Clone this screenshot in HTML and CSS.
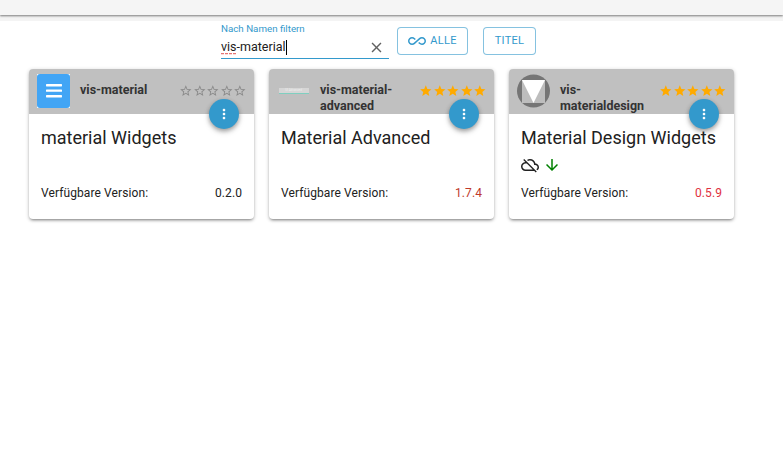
FILE: index.html
```html
<!DOCTYPE html>
<html lang="de">
<head>
<meta charset="utf-8">
<title>Adapter</title>
<link rel="stylesheet" href="styles.css">
</head>
<body>
<div class="appbar"></div>
<div class="toolbar">
  <div class="filter">
    <div class="filter-label">Nach Namen filtern</div>
    <div class="filter-row">
      <span class="filter-value"><span class="spell">vis</span>-material</span><span class="caret"></span>
      <svg class="clear" viewBox="0 0 24 24"><path d="M19 6.41 17.59 5 12 10.59 6.41 5 5 6.41 10.59 12 5 17.59 6.41 19 12 13.41 17.59 19 19 17.59 13.41 12z"/></svg>
    </div>
  </div>
  <button class="btn btn-all"><svg class="inf" viewBox="0 0 24 24"><path d="M18.6 6.62c-1.44 0-2.8.56-3.77 1.53L12 10.66 10.48 12h.01L7.8 14.39c-.64.64-1.49.99-2.4.99-1.87 0-3.39-1.51-3.39-3.38S3.53 8.62 5.4 8.62c.91 0 1.76.35 2.44 1.03l1.13 1 1.51-1.34L9.22 8.2C8.2 7.18 6.84 6.62 5.4 6.62 2.42 6.62 0 9.04 0 12s2.42 5.38 5.4 5.38c1.44 0 2.8-.56 3.77-1.53l2.83-2.5.01.01L13.52 12h-.01l2.69-2.39c.64-.64 1.49-.99 2.4-.99 1.87 0 3.39 1.51 3.39 3.38s-1.52 3.38-3.39 3.38c-.9 0-1.76-.35-2.44-1.03l-1.14-1.01-1.51 1.34 1.27 1.12c1.02 1.01 2.37 1.57 3.82 1.57 2.98 0 5.4-2.41 5.4-5.38s-2.42-5.37-5.4-5.37z"/></svg>ALLE</button>
  <button class="btn btn-title">TITEL</button>
</div>
<main class="cards">
  <article class="card">
    <header class="card-head">
      <div class="logo logo-blue"><svg viewBox="0 0 33 34"><rect class="logo-bg" width="33" height="34" rx="3"/><rect x="9" y="10" width="16" height="2.4" rx=".6"/><rect x="9" y="15.4" width="16" height="2.4" rx=".6"/><rect x="9" y="21" width="16" height="2.4" rx=".6"/></svg></div>
      <div class="name">vis-material</div>
      <div class="stars stars-empty"><svg viewBox="0 0 24 24"><use href="#star-o"/></svg><svg viewBox="0 0 24 24"><use href="#star-o"/></svg><svg viewBox="0 0 24 24"><use href="#star-o"/></svg><svg viewBox="0 0 24 24"><use href="#star-o"/></svg><svg viewBox="0 0 24 24"><use href="#star-o"/></svg></div>
      <button class="fab"><svg viewBox="0 0 24 24"><use href="#dots"/></svg></button>
    </header>
    <div class="card-body">
      <h2 class="title">material Widgets</h2>
      <div class="status"></div>
      <div class="version"><span>Verfügbare Version:</span><span class="v-ok">0.2.0</span></div>
    </div>
  </article>
  <article class="card">
    <header class="card-head">
      <div class="logo logo-adv"><span class="adv-text">UI Advanced</span></div>
      <div class="name">vis-material-advanced</div>
      <div class="stars stars-full"><svg viewBox="0 0 24 24"><use href="#star"/></svg><svg viewBox="0 0 24 24"><use href="#star"/></svg><svg viewBox="0 0 24 24"><use href="#star"/></svg><svg viewBox="0 0 24 24"><use href="#star"/></svg><svg viewBox="0 0 24 24"><use href="#star"/></svg></div>
      <button class="fab"><svg viewBox="0 0 24 24"><use href="#dots"/></svg></button>
    </header>
    <div class="card-body">
      <h2 class="title">Material Advanced</h2>
      <div class="status"></div>
      <div class="version"><span>Verfügbare Version:</span><span class="v-new">1.7.4</span></div>
    </div>
  </article>
  <article class="card">
    <header class="card-head">
      <div class="logo logo-md"><svg viewBox="0 0 33 34"><circle cx="16.5" cy="17" r="16.5" fill="#757575"/><rect x="5" y="6" width="23" height="23" fill="#bdbdbd"/><path d="M5 6h23L16.5 29z" fill="#fff"/></svg></div>
      <div class="name">vis-materialdesign</div>
      <div class="stars stars-full"><svg viewBox="0 0 24 24"><use href="#star"/></svg><svg viewBox="0 0 24 24"><use href="#star"/></svg><svg viewBox="0 0 24 24"><use href="#star"/></svg><svg viewBox="0 0 24 24"><use href="#star"/></svg><svg viewBox="0 0 24 24"><use href="#star"/></svg></div>
      <button class="fab"><svg viewBox="0 0 24 24"><use href="#dots"/></svg></button>
    </header>
    <div class="card-body">
      <h2 class="title">Material Design Widgets</h2>
      <div class="status">
        <svg class="cloud" viewBox="0 0 24 24"><path d="M19.35 10.04C18.67 6.59 15.64 4 12 4c-1.48 0-2.85.43-4.01 1.17l1.46 1.46C10.21 6.23 11.08 6 12 6c3.04 0 5.5 2.46 5.5 5.5v.5H19c1.66 0 3 1.34 3 3 0 1.13-.64 2.11-1.56 2.62l1.45 1.45C23.16 18.16 24 16.68 24 15c0-2.64-2.05-4.78-4.65-4.96zM3 5.27l2.75 2.74C2.56 8.15 0 10.77 0 14c0 3.31 2.69 6 6 6h11.73l2 2L21 20.73 4.27 4 3 5.27zM7.73 10l8 8H6c-2.21 0-4-1.79-4-4s1.79-4 4-4h1.73z"/></svg>
        <svg class="down" viewBox="0 0 24 24"><path d="M20 12l-1.41-1.41L13 16.17V4h-2v12.17l-5.58-5.59L4 12l8 8 8-8z"/></svg>
      </div>
      <div class="version"><span>Verfügbare Version:</span><span class="v-red">0.5.9</span></div>
    </div>
  </article>
</main>
<svg class="defs" aria-hidden="true">
  <defs>
    <path id="star" d="M12 17.27 18.18 21l-1.64-7.03L22 9.24l-7.19-.61L12 2 9.19 8.63 2 9.24l5.46 4.73L5.82 21z"/>
    <path id="star-o" d="M22 9.24l-7.19-.62L12 2 9.19 8.63 2 9.24l5.46 4.73L5.82 21 12 17.27 18.18 21l-1.63-7.03L22 9.24zM12 15.4l-3.76 2.27 1-4.28-3.32-2.88 4.38-.38L12 6.1l1.71 4.04 4.38.38-3.32 2.88 1 4.28L12 15.4z"/>
    <path id="dots" d="M12 8c1.1 0 2-.9 2-2s-.9-2-2-2-2 .9-2 2 .9 2 2 2zm0 2c-1.1 0-2 .9-2 2s.9 2 2 2 2-.9 2-2-.9-2-2-2zm0 6c-1.1 0-2 .9-2 2s.9 2 2 2 2-.9 2-2-.9-2-2-2z"/>
  </defs>
</svg>
</body>
</html>
```
FILE: styles.css
```css
* { box-sizing: border-box; }
html, body { margin: 0; padding: 0; }
body {
  width: 783px;
  height: 470px;
  overflow: hidden;
  background: #fff;
  font-family: Roboto, "Liberation Sans", sans-serif;
  color: rgba(0,0,0,.87);
}
.appbar {
  height: 15px;
  background: #f5f5f5;
  box-shadow: 0 1px 2px rgba(0,0,0,.5), 0 6px 0 #f4f4f4;
}
.toolbar {
  display: flex;
  align-items: flex-start;
  height: 54px;
  padding: 8px 0 0 221px;
}
.filter { width: 168px; }
.filter-label {
  font-size: 9.75px;
  line-height: 11px;
  color: #3399cc;
}
.filter-row {
  display: flex;
  align-items: center;
  height: 21px;
  margin-top: 4px;
  padding-bottom: 2px;
  border-bottom: 1px solid #3399cc;
  font-size: 12.5px;
  line-height: 18px;
  color: #212121;
}
.spell { text-decoration: underline dashed #e57373; text-underline-offset: 2px; }
.caret { width: 1px; height: 15px; background: #000; }
.clear { width: 17px; height: 17px; margin-left: auto; margin-right: 4px; fill: #616161; }
.btn {
  display: flex;
  align-items: center;
  justify-content: center;
  height: 28px;
  margin-top: 4px;
  padding: 0 0 1px;
  background: #fff;
  border: 1px solid rgba(51,153,204,.6);
  border-radius: 4px;
  font-family: inherit;
  font-size: 11px;
  font-weight: 400;
  letter-spacing: .3px;
  color: #3399cc;
}
.btn-all { width: 71px; margin-left: 8px; }
.btn-title { width: 53px; margin-left: 15px; }
.inf { width: 18px; height: 18px; margin-right: 4px; fill: #3399cc; }
.cards {
  display: flex;
  gap: 15px;
  padding-left: 29px;
}
.card {
  width: 225px;
  height: 150px;
  border-radius: 4px;
  background: #fff;
  box-shadow: 0 2px 3px -1px rgba(0,0,0,.4), 0 1px 4px rgba(0,0,0,.2);
}
.card-head {
  position: relative;
  display: flex;
  align-items: flex-start;
  height: 45px;
  padding: 5px 0 0 8px;
  background: #c0c0c0;
  border-radius: 4px 4px 0 0;
}
.logo { flex: none; width: 33px; height: 34px; }
.logo svg { display: block; width: 100%; height: 100%; }
.logo-blue { background: #fff; fill: #fff; }
.logo-bg { fill: #42a5f5; }
.logo-adv { display: flex; align-items: center; justify-content: center; }
.adv-text {
  display: block;
  width: 30px;
  height: 6px;
  border-bottom: 1px solid #7fcfc0;
  background: #d6d6d6;
  color: #eee;
  font-size: 3px;
  line-height: 4px;
  text-align: center;
  overflow: hidden;
}
.name {
  width: 88px;
  margin-left: 10px;
  margin-top: 8px;
  font-size: 12.5px;
  font-weight: 700;
  line-height: 16px;
  color: #333;
}
.stars {
  position: absolute;
  top: 15px;
  right: 7px;
  display: flex;
}
.stars svg { width: 13.6px; height: 13.6px; }
.stars-empty svg { fill: #8a8a8a; }
.stars-full svg { fill: #ffaa00; }
.fab {
  position: absolute;
  top: 30px;
  right: 15px;
  display: flex;
  align-items: center;
  justify-content: center;
  width: 30px;
  height: 30px;
  padding: 0;
  border: 0;
  border-radius: 50%;
  background: #3399cc;
  box-shadow: 0 2px 4px rgba(0,0,0,.3), 0 3px 6px rgba(0,0,0,.15);
}
.fab svg { width: 16px; height: 16px; fill: #fff; }
.card-body { padding: 11px 12px 0; }
.title {
  margin: 0;
  font-size: 18px;
  font-weight: 400;
  line-height: 25px;
  color: #212121;
}
.status {
  display: flex;
  align-items: center;
  gap: 5px;
  height: 20px;
  margin-top: 5px;
}
.cloud { width: 18px; height: 18px; fill: #212121; }
.down { width: 18px; height: 18px; margin-left: -1px; fill: #008000; }
.version {
  display: flex;
  justify-content: space-between;
  margin-top: 10px;
  font-size: 12px;
  letter-spacing: .1px;
  line-height: 16px;
  color: #212121;
}
.v-ok { color: #212121; }
.v-new { color: #c0392b; }
.v-red { color: #e03040; }
.defs { position: absolute; width: 0; height: 0; }
```
